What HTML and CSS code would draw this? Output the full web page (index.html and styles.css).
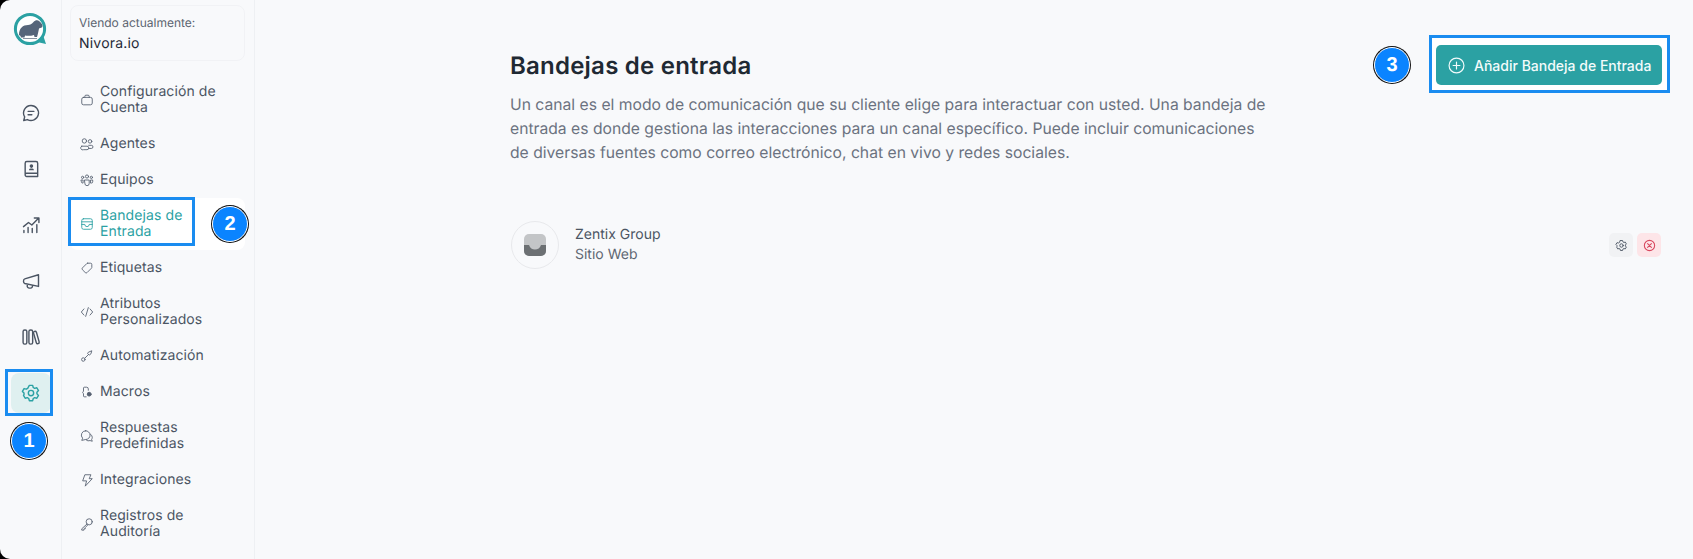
FILE: index.html
```html
<!DOCTYPE html>
<html lang="es">
<head>
<meta charset="utf-8">
<title>Bandejas de entrada</title>
<link rel="stylesheet" href="styles.css">
</head>
<body>
<div class="app">
  <nav class="rail">
    <div class="logo">
      <svg viewBox="0 0 36 36" width="36" height="36"><circle cx="17" cy="17" r="14.6" fill="#fff" stroke="#2ba1a3" stroke-width="3"/><path d="M24 30l9 2-3-9z" fill="#2ba1a3"/><path d="M6 23C6 16 10 13 15 13c2 0 4-1 5.500-3 1.500-2 4.500-2 5.500-1 1.500 1 3.500 3 3.500 5 0 1.500-2 2-3.500 2.500-.5 2.500-1 5.500-2 8.500h-2.500l-.5-2c-3 1-7 1-9 .5l-.5 2H8l-.5-1.500z" fill="#56657a"/><path d="M10 26.500h14" stroke="#56657a" stroke-width=".7"/></svg>
    </div>
    <a class="rail-btn"><svg viewBox="0 0 24 24" width="20" height="20" class="ic"><path d="M12 3a9 9 0 1 1-4.300 16.900L3.300 21l1.100-4.300A9 9 0 0 1 12 3z"/><path d="M8.500 10h7M8.500 14h4.500"/></svg></a>
    <a class="rail-btn"><svg viewBox="0 0 24 24" width="20" height="20" class="ic"><path d="M5 18.500V5a2 2 0 0 1 2-2h11a2 2 0 0 1 2 2v16H7a2 2 0 0 1-2-2.500zM5 18.500A1.500 1.500 0 0 1 6.500 17H20"/><circle cx="12.500" cy="8.500" r="1.300" fill="#4b5563"/><path d="M9.500 13.500c0-1.500 1.300-2 3-2s3 .5 3 2z" fill="#4b5563" stroke="none"/></svg></a>
    <a class="rail-btn"><svg viewBox="0 0 24 24" width="20" height="20" class="ic"><path d="M3 14l6-5 4 3 8-8M16 3.500h5.500V9M3.500 21v-2.500M8.500 21v-6M13.500 21v-5M19 21v-9.500"/></svg></a>
    <a class="rail-btn"><svg viewBox="0 0 24 24" width="20" height="20" class="ic"><path d="M21 4.500v14L4.500 15c-2-.5-2-5 0-5.500zM8 16l-.5 1.500A2.500 2.500 0 0 0 10 20.500h1.500a2.500 2.500 0 0 0 2.300-2.800"/></svg></a>
    <a class="rail-btn"><svg viewBox="0 0 24 24" width="20" height="20" class="ic"><rect x="2.500" y="3.500" width="4.500" height="17" rx="2"/><rect x="9.500" y="3.500" width="4.500" height="17" rx="2"/><path d="M16.200 5.300a1.800 1.800 0 0 1 2.300 1l3.300 11.500a1.800 1.800 0 0 1-1.200 2.200 1.800 1.800 0 0 1-2.200-1.200L15.100 7.500a1.800 1.800 0 0 1 1.100-2.200z"/></svg></a>
    <a class="rail-btn rail-active"><svg viewBox="0 0 24 24" width="20" height="20" class="ic ic-teal"><circle cx="12" cy="12" r="3.200"/><path d="M10 2.800h4l.7 2.600 1.700 1 2.600-.7 2 3.400-1.900 1.900v2l1.900 1.900-2 3.400-2.600-.7-1.700 1-.7 2.600h-4l-.7-2.600-1.700-1-2.600.7-2-3.400L3.600 14v-2L1.700 10.100l2-3.400 2.600.7 1.700-1z" stroke-linejoin="round"/></svg></a>
  </nav>

  <aside class="side">
    <div class="account">
      <div class="account-label">Viendo actualmente:</div>
      <div class="account-name">Nivora.io</div>
    </div>
    <ul class="menu">
      <li class="item tall"><svg viewBox="0 0 16 16" class="mi"><rect x="2" y="5" width="12" height="8.500" rx="2"/><path d="M5.500 5V3.800a1.300 1.300 0 0 1 1.300-1.300h2.400a1.300 1.300 0 0 1 1.300 1.300V5"/></svg><span>Configuración de Cuenta</span></li>
      <li class="item"><svg viewBox="0 0 16 16" class="mi"><circle cx="5" cy="4.500" r="2.500"/><circle cx="11.500" cy="5" r="2"/><path d="M2 10.500h6a2 2 0 0 1 0 4H4a2 2 0 0 1-2-4zM10 9.500h3a1.800 1.800 0 0 1 0 3.600h-2.500"/></svg><span>Agentes</span></li>
      <li class="item"><svg viewBox="0 0 16 16" class="mi"><circle cx="8" cy="4" r="1.800"/><circle cx="3" cy="5" r="1.300"/><circle cx="13" cy="5" r="1.300"/><path d="M5.500 8h5v4a2.500 2.500 0 0 1-5 0zM1.500 8h2v3.500h-.5a1.500 1.500 0 0 1-1.500-1.500zM12.500 8h2v2a1.500 1.500 0 0 1-1.500 1.500h-.5z"/></svg><span>Equipos</span></li>
      <li class="item tall item-active"><svg viewBox="0 0 16 16" class="mi mi-teal"><rect x="2" y="2" width="12" height="12" rx="2"/><path d="M2 5.500h12M2 8.500h3.500a2.500 2.500 0 0 0 5 0H14"/></svg><span>Bandejas de Entrada</span></li>
      <li class="item"><svg viewBox="0 0 16 16" class="mi"><path d="M8.800 2.500h3.200a1.500 1.500 0 0 1 1.500 1.500v3.200a1.500 1.500 0 0 1-.4 1l-5 5a1.500 1.500 0 0 1-2.100 0l-3.200-3.200a1.500 1.500 0 0 1 0-2.100l5-5a1.500 1.500 0 0 1 1-.4z"/></svg><span>Etiquetas</span></li>
      <li class="item tall"><svg viewBox="0 0 16 16" class="mi"><path d="M4.500 4.500L1.500 8l3 3.500M11.500 4.500l3 3.500-3 3.500M9.500 3l-3 10"/></svg><span>Atributos Personalizados</span></li>
      <li class="item"><svg viewBox="0 0 16 16" class="mi"><circle cx="3.800" cy="12" r="2"/><path d="M5.500 10.500l4-4M10 3.500l3.500-1.500-1 3.500-2 1.500-1.500-1.500z"/></svg><span>Automatización</span></li>
      <li class="item"><svg viewBox="0 0 16 16" class="mi"><path d="M7 13.500H5a1 1 0 0 1-1-1V10L3 8.500l1-1.500V3.500a1 1 0 0 1 1-1h2.500a2 2 0 0 1 2 2v1.500"/><circle cx="10.500" cy="10.500" r="2.200" fill="#566070"/></svg><span>Macros</span></li>
      <li class="item tall"><svg viewBox="0 0 16 16" class="mi"><path d="M6.500 2a5 5 0 0 1 0 10L2 13l1-2.500A5 5 0 0 1 6.500 2z"/><path d="M12 6a4 4 0 0 1 2 3.500c0 1-.3 1.800-.7 2.400l.7 2.100-2.500-.8a4 4 0 0 1-4.500-.7"/></svg><span>Respuestas Predefinidas</span></li>
      <li class="item"><svg viewBox="0 0 16 16" class="mi"><path d="M6 2h6.500l-2 4.500H14L6 15l1.500-6H3.500z" stroke-linejoin="round"/></svg><span>Integraciones</span></li>
      <li class="item tall"><svg viewBox="0 0 16 16" class="mi"><circle cx="10.500" cy="5.500" r="3.500"/><path d="M8 8l-6 5.500V15h2.500v-1.500H6V12l2.500-2.500"/></svg><span>Registros de Auditoría</span></li>
    </ul>
  </aside>

  <main class="main">
    <header class="head">
      <div class="intro">
        <h1 class="title">Bandejas de entrada</h1>
        <p class="desc">Un canal es el modo de comunicación que su cliente elige para interactuar con usted. Una bandeja de entrada es donde gestiona las interacciones para un canal específico. Puede incluir comunicaciones de diversas fuentes como correo electrónico, chat en vivo y redes sociales.</p>
      </div>
      <button class="add"><svg viewBox="0 0 16 16" width="17" height="17" class="plus"><circle cx="8" cy="8" r="7"/><path d="M8 4.800v6.400M4.800 8h6.400"/></svg>Añadir Bandeja de Entrada</button>
    </header>
    <div class="row">
      <div class="avatar"><svg viewBox="0 0 22 22" width="22" height="22"><rect width="22" height="22" rx="5" fill="#c3c5c7"/><path d="M0 11h5c1 3 3.200 4.500 6 4.500s5-1.500 6-4.500h5v6a5 5 0 0 1-5 5H5a5 5 0 0 1-5-5z" fill="#6c7073"/></svg></div>
      <div class="row-text">
        <div class="row-name">Zentix Group</div>
        <div class="row-sub">Sitio Web</div>
      </div>
      <div class="actions">
        <button class="act act-gray"><svg viewBox="0 0 24 24" width="13" height="13" class="ic"><circle cx="12" cy="12" r="3.200"/><path d="M10 2.800h4l.7 2.600 1.700 1 2.600-.7 2 3.400-1.900 1.900v2l1.900 1.900-2 3.400-2.600-.7-1.700 1-.7 2.600h-4l-.7-2.600-1.700-1-2.600.7-2-3.400L3.600 14v-2L1.700 10.100l2-3.400 2.600.7 1.700-1z" stroke-linejoin="round"/></svg></button>
        <button class="act act-red"><svg viewBox="0 0 24 24" width="13" height="13" class="ic ic-red"><circle cx="12" cy="12" r="9.500"/><path d="M8.500 8.500l7 7M15.500 8.500l-7 7"/></svg></button>
      </div>
    </div>
  </main>

  <div class="mark mark-1"></div>
  <div class="mark mark-2"></div>
  <div class="mark mark-3"></div>
  <div class="badge badge-1">1</div>
  <div class="badge badge-2">2</div>
  <div class="badge badge-3">3</div>
</div>
</body>
</html>
```

FILE: styles.css
```css
* { box-sizing: border-box; }
html, body { margin: 0; height: 100%; background: #000; }
body { font-family: Inter, "Liberation Sans", sans-serif; overflow: hidden; text-rendering: geometricPrecision; }
.app {
  position: relative;
  display: flex;
  width: 1693px;
  height: 559px;
  background: #f8f9fb;
  border-radius: 10px 0 0 10px;
  overflow: hidden;
}
.rail {
  flex: 0 0 62px;
  border-right: 1px solid #eef0f3;
  display: flex;
  flex-direction: column;
  align-items: center;
  padding: 12px 0 0 0;
  gap: 16px;
}
.logo { width: 36px; height: 36px; margin-bottom: 29px; }
.logo svg { display: block; }
.rail-btn {
  width: 40px;
  height: 40px;
  border-radius: 8px;
  display: flex;
  align-items: center;
  justify-content: center;
}
.rail-active { background: #dff0f0; }
.ic { fill: none; stroke: #4b5563; stroke-width: 1.700; stroke-linecap: round; stroke-linejoin: round; }
.ic-teal { stroke: #2ba1a3; }
.ic-red { stroke: #d9485f; stroke-width: 2; }
.side {
  flex: 0 0 193px;
  border-right: 1px solid #eef0f3;
  padding: 5px 9px 0 8px;
}
.account {
  height: 56px;
  border: 1px solid #f1f2f5;
  border-radius: 8px;
  padding: 9px 8px;
}
.account-label { font-size: 12px; line-height: 16px; color: #5b6470; }
.account-name { font-size: 14px; line-height: 20px; margin-top: 3px; color: #1f2937; letter-spacing: .2px; }
.menu { list-style: none; margin: 13px 0 0; padding: 0; }
.item {
  display: flex;
  align-items: center;
  gap: 6px;
  height: 36px;
  padding: 0 10px;
  font-size: 14px;
  line-height: 16px;
  letter-spacing: .1px;
  color: #4b5563;
  border-radius: 8px;
}
.item.tall { height: 52px; }
.item span { width: 132px; }
.item-active { background: #fff; color: #2ba1a3; }
.mi { flex: 0 0 14px; width: 14px; height: 14px; fill: none; stroke: #566070; stroke-width: 1; stroke-linecap: round; stroke-linejoin: round; }
.mi-teal { stroke: #2ba1a3; }
.main { flex: 1; padding: 46px 31px 0 255px; min-width: 0; }
.head { display: flex; justify-content: space-between; align-items: flex-start; }
.intro { width: 768px; }
.title { margin: 0; font-size: 24px; line-height: 40px; font-weight: 600; letter-spacing: .23px; color: #1f2933; }
.desc { margin: 7px 0 0; width: 761px; font-size: 15.7px; line-height: 24px; color: #6b7280; }
.add {
  position: relative;
  z-index: 1;
  top: -1px;
  display: flex;
  align-items: center;
  gap: 9px;
  width: 226px;
  height: 40px;
  padding: 0 10px 0 12px;
  border: 0;
  border-radius: 5px;
  background: #2ba1a3;
  color: #f3fbfb;
  font-family: inherit;
  font-size: 14px;
  font-weight: 450;
  white-space: nowrap;
}
.plus { fill: none; stroke: #f3fbfb; stroke-width: 1.100; stroke-linecap: round; flex: none; }
.row { display: flex; align-items: center; margin-top: 56px; height: 48px; margin-left: 1px; }
.avatar {
  width: 48px;
  height: 48px;
  border: 1px solid #e8e9ec;
  border-radius: 50%;
  display: flex;
  align-items: center;
  justify-content: center;
  background: #f8f9fb;
}
.row-text { margin-left: 16px; }
.row-name { font-size: 14px; line-height: 20px; color: #4b5563; }
.row-sub { font-size: 14px; line-height: 20px; color: #5f6773; }
.actions { margin-left: auto; margin-right: 1px; display: flex; gap: 4px; }
.act {
  width: 24px;
  height: 24px;
  border: 0;
  padding: 0;
  border-radius: 5px;
  display: flex;
  align-items: center;
  justify-content: center;
}
.act-gray { background: #f1f2f4; }
.act-red { background: #fde5e8; }
.mark { position: absolute; border: 3px solid #1a8cf0; pointer-events: none; }
.mark-1 { left: 5px; top: 369px; width: 48px; height: 47px; }
.mark-2 { left: 68px; top: 197px; width: 127px; height: 49px; }
.mark-3 { left: 1429px; top: 35px; width: 241px; height: 58px; background: #fff; }
.badge {
  position: absolute;
  width: 36px;
  height: 36px;
  border-radius: 50%;
  background: #0a84ff;
  border: 1px solid #fff;
  box-shadow: 0 0 0 1px #111;
  color: #fff;
  font: 700 20px/34px "Liberation Sans", Arial, sans-serif;
  text-align: center;
}
.badge-1 { left: 11px; top: 423px; }
.badge-2 { left: 212px; top: 206px; }
.badge-3 { left: 1374px; top: 47px; }
```
